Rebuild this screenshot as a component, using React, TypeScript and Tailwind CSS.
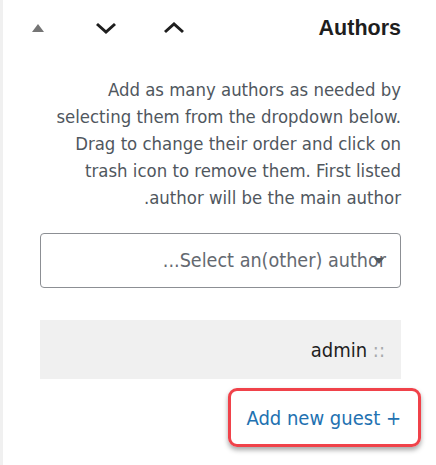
import React from "react";

const font = { fontFamily: '"DejaVu Sans Condensed", "Liberation Sans", sans-serif' };

export default function App() {
  return (
    <div className="w-[436px] h-[465px] bg-white border-l-[3px] border-[#f0f0f0] overflow-hidden" style={font}>
      <div className="flex items-center h-[56px] pl-[27px] pr-[35px]">
        <div className="w-[16px] flex justify-center">
          <svg width="12" height="8" viewBox="0 0 12 8"><path d="M6 0 L12 8 L0 8 Z" fill="#757575" /></svg>
        </div>
        <div className="w-[22px] ml-[49px] flex justify-center">
          <svg width="22" height="12" viewBox="0 0 22 12"><path d="M2 2 L11 10 L20 2" fill="none" stroke="#1e1e1e" strokeWidth="3" /></svg>
        </div>
        <div className="w-[22px] ml-[46px] flex justify-center">
          <svg width="22" height="12" viewBox="0 0 22 12"><path d="M2 10 L11 2 L20 10" fill="none" stroke="#1e1e1e" strokeWidth="3" /></svg>
        </div>
        <div className="flex-1 text-right text-[21.5px] font-bold text-[#1e1e1e]" style={{ fontFamily: '"Liberation Sans", Arial, sans-serif' }}>Authors</div>
      </div>
      <div dir="rtl" className="pl-[37px] pr-[35px]">
        <p className="mt-[20px] text-[18.4px] leading-[27px] text-[#50575e] text-right">
          Add as many authors as needed by selecting them from the dropdown below. Drag to change their order and click on trash icon to remove them. First listed author will be the main author.
        </p>
        <div className="relative mt-[22px] h-[55px] border border-[#8c8f94] rounded-[4px] flex items-center pr-[14px]">
          <span className="text-[19.6px] text-[#646970]">Select an(other) author...</span>
          <svg className="absolute right-[16px] top-[24px]" width="10" height="6" viewBox="0 0 10 6"><path d="M0 0 L10 0 L5 6 Z" fill="#50575e" /></svg>
        </div>
        <div dir="ltr" className="mt-[32px] h-[59px] bg-[#f0f0f0] flex items-center justify-end pr-[16px]">
          <span className="text-[20px] text-[#1e1e1e]">admin <span className="text-[#a7aaad]">::</span></span>
        </div>
        <div dir="ltr" className="flex justify-end mt-[9px] -mr-[20px]">
          <div className="h-[59px] w-[193px] border-[3px] border-[#f0424a] rounded-[9px] shadow-[0_3px_5px_rgba(0,0,0,0.35)] flex items-center justify-end pr-[17px]">
            <span className="text-[20px] text-[#2271b1]">Add new guest +</span>
          </div>
        </div>
      </div>
    </div>
  );
}
